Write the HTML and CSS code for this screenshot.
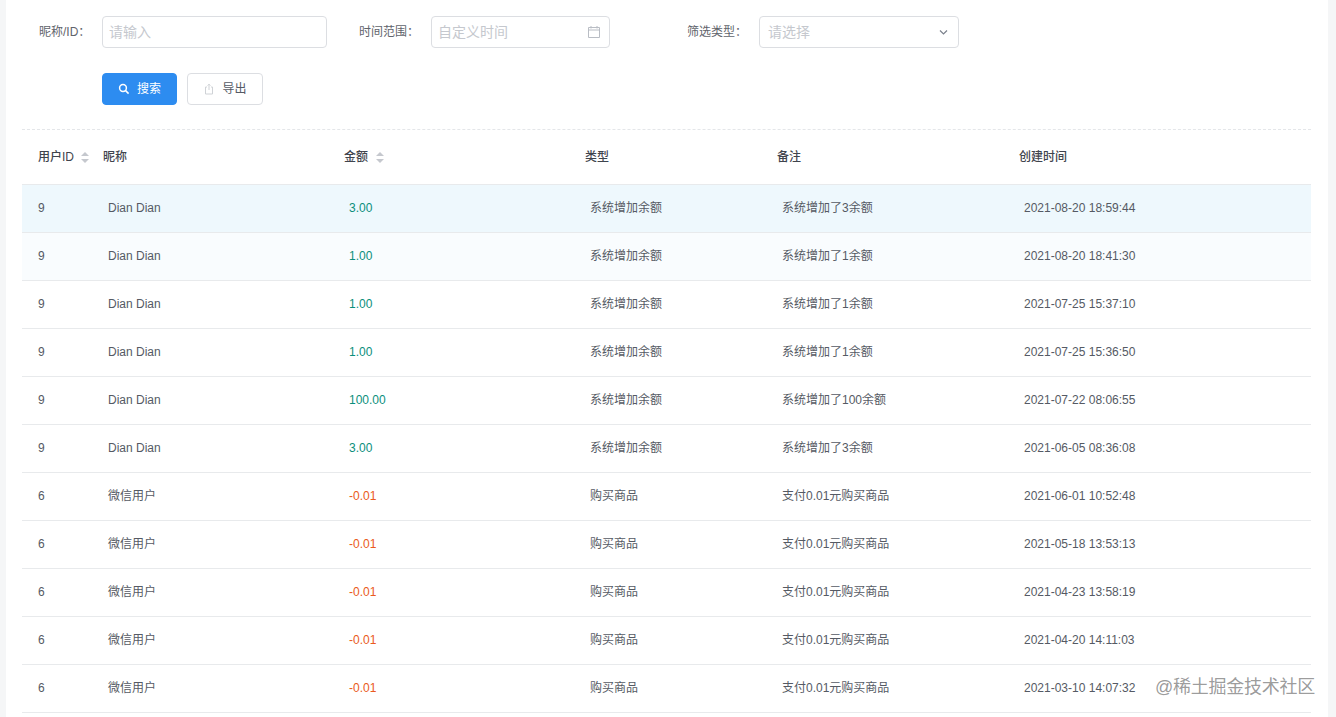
FILE: index.html
```html
<!DOCTYPE html>
<html lang="zh-CN">
<head>
<meta charset="utf-8">
<title>余额记录</title>
<link rel="stylesheet" href="styles.css">
</head>
<body>
<main class="panel">
  <form class="filters">
    <div class="filter-row">
      <label class="field field-name"><span class="field-label">昵称/ID：</span><span class="control control-name"><span class="placeholder">请输入</span></span></label>
      <label class="field field-time"><span class="field-label">时间范围：</span><span class="control control-time"><span class="placeholder">自定义时间</span>
        <svg class="ctl-icon" width="14" height="14" viewBox="0 0 14 14" fill="none" stroke="#b9bdc4" stroke-width="1"><path d="M1.5 2.5h11v10h-11zM1.5 5h11M4 1v2.5M10 1v2.5"/></svg></span></label>
      <label class="field field-type"><span class="field-label">筛选类型：</span><span class="control control-type"><span class="placeholder">请选择</span>
        <svg class="ctl-icon" width="12" height="12" viewBox="0 0 12 12" fill="none" stroke="#7b818c" stroke-width="1.2"><path d="M2 4.5l3.5 3.5L9 4.5"/></svg></span></label>
    </div>
    <div class="actions">
      <button type="button" class="btn btn-primary"><svg width="12" height="12" viewBox="0 0 12 12" fill="none" stroke="#fff" stroke-width="1.5"><circle cx="5" cy="5" r="3.4"/><path d="M7.6 7.6L10.6 10.6"/></svg>搜索</button>
      <button type="button" class="btn btn-default"><svg width="12" height="12" viewBox="0 0 12 12" fill="none" stroke="#cfd2d6" stroke-width="1"><path d="M4 4H2.5v7h7V4H8M6 7V1.2M4.6 2.6L6 1.2l1.4 1.4"/></svg>导出</button>
    </div>
  </form>

  <table class="data">
    <colgroup>
      <col class="c-id"><col class="c-name"><col class="c-amount"><col class="c-type"><col class="c-note"><col class="c-time">
    </colgroup>
    <thead>
      <tr>
        <th>用户ID<span class="sorter"></span></th>
        <th>昵称</th>
        <th>金额<span class="sorter sorter-far"></span></th>
        <th>类型</th>
        <th>备注</th>
        <th>创建时间</th>
      </tr>
    </thead>
    <tbody>
      <tr class="row-hover"><td>9</td><td>Dian Dian</td><td class="plus">3.00</td><td>系统增加余额</td><td>系统增加了3余额</td><td>2021-08-20 18:59:44</td></tr>
      <tr class="row-fade"><td>9</td><td>Dian Dian</td><td class="plus">1.00</td><td>系统增加余额</td><td>系统增加了1余额</td><td>2021-08-20 18:41:30</td></tr>
      <tr><td>9</td><td>Dian Dian</td><td class="plus">1.00</td><td>系统增加余额</td><td>系统增加了1余额</td><td>2021-07-25 15:37:10</td></tr>
      <tr><td>9</td><td>Dian Dian</td><td class="plus">1.00</td><td>系统增加余额</td><td>系统增加了1余额</td><td>2021-07-25 15:36:50</td></tr>
      <tr><td>9</td><td>Dian Dian</td><td class="plus">100.00</td><td>系统增加余额</td><td>系统增加了100余额</td><td>2021-07-22 08:06:55</td></tr>
      <tr><td>9</td><td>Dian Dian</td><td class="plus">3.00</td><td>系统增加余额</td><td>系统增加了3余额</td><td>2021-06-05 08:36:08</td></tr>
      <tr><td>6</td><td>微信用户</td><td class="minus">-0.01</td><td>购买商品</td><td>支付0.01元购买商品</td><td>2021-06-01 10:52:48</td></tr>
      <tr><td>6</td><td>微信用户</td><td class="minus">-0.01</td><td>购买商品</td><td>支付0.01元购买商品</td><td>2021-05-18 13:53:13</td></tr>
      <tr><td>6</td><td>微信用户</td><td class="minus">-0.01</td><td>购买商品</td><td>支付0.01元购买商品</td><td>2021-04-23 13:58:19</td></tr>
      <tr><td>6</td><td>微信用户</td><td class="minus">-0.01</td><td>购买商品</td><td>支付0.01元购买商品</td><td>2021-04-20 14:11:03</td></tr>
      <tr><td>6</td><td>微信用户</td><td class="minus">-0.01</td><td>购买商品</td><td>支付0.01元购买商品</td><td>2021-03-10 14:07:32</td></tr>
    </tbody>
  </table>
</main>
<div class="watermark">@稀土掘金技术社区</div>
</body>
</html>
```
FILE: styles.css
```css
* { box-sizing: border-box; }
html, body { margin: 0; height: 717px; overflow: hidden; }
body {
  background: #f5f6f7;
  font-family: "Liberation Sans", "Noto Sans CJK SC", sans-serif;
  font-size: 12px;
  color: #555a64;
}
.panel {
  margin: 0 8px 0 6px;
  height: 717px;
  padding: 16px 17px 0 16px;
  background: #fff;
}
.filters {
  height: 114px;
  border-bottom: 1px dashed #e4e6e9;
}
.filter-row { display: flex; height: 32px; }
.field { display: flex; align-items: center; }
.field-label { color: #5f646c; line-height: 32px; align-self: flex-start; }
.field-name { margin-left: 17px; width: 304px; }
.field-name .field-label { width: 63px; }
.field-time { margin-left: 16px; width: 251px; }
.field-time .field-label { width: 72px; }
.field-type { margin-left: 77px; }
.field-type .field-label { width: 72px; }
.control {
  display: flex;
  align-items: center;
  justify-content: space-between;
  height: 32px;
  padding: 0 9px 0 6px;
  background: #fff;
  border: 1px solid #dcdee2;
  border-radius: 4px;
  font-size: 14px;
}
.control-name { width: 225px; }
.control-time { width: 179px; }
.control-type { width: 200px; padding-left: 8px; }
.placeholder { color: #c5c8ce; line-height: 28px; height: 28px; overflow: hidden; }
.ctl-icon { flex: none; margin-right: -1px; }
.actions { display: flex; gap: 10px; margin: 25px 0 0 80px; }
.btn {
  display: flex;
  align-items: center;
  justify-content: center;
  gap: 7px;
  height: 32px;
  padding: 0 0 1px;
  border-radius: 4px;
  font: inherit;
  line-height: 16px;
}
.btn-primary { width: 75px; background: #2d8cf0; border: 1px solid #2d8cf0; color: #fff; }
.btn-default { width: 76px; background: #fff; border: 1px solid #dcdee2; color: #555a64; }

.data { width: 1289px; border-collapse: collapse; table-layout: fixed; }
.c-id { width: 65px; }
.c-name { width: 241px; }
.c-amount { width: 241px; }
.c-type { width: 192px; }
.c-note { width: 242px; }
.c-time { width: 308px; }
th {
  height: 54px;
  padding: 0 0 0 16px;
  text-align: left;
  font-weight: 500;
  line-height: 16px;
  color: #3f444d;
  border-bottom: 1px solid #e8eaec;
  white-space: nowrap;
}
td {
  height: 48px;
  padding: 0 0 0 21px;
  line-height: 16px;
  color: #555a64;
  border-bottom: 1px solid #e8eaec;
  white-space: nowrap;
}
td:first-child { padding-left: 16px; }
.row-hover td { background: #eef8fd; }
.row-fade td { background: #f9fcfe; }
td.plus { color: #0b8f7c; }
td.minus { color: #ea5a20; }
.sorter {
  display: inline-block;
  position: relative;
  width: 8px;
  height: 11px;
  margin-left: 7px;
  vertical-align: -2px;
}
.sorter-far { margin-left: 8px; }
.sorter::before, .sorter::after {
  content: "";
  position: absolute;
  left: 0;
  border-left: 4px solid transparent;
  border-right: 4px solid transparent;
}
.sorter::before { top: 0; border-bottom: 4px solid #c5c8ce; }
.sorter::after { bottom: 0; border-top: 4px solid #c5c8ce; }
.watermark {
  position: absolute;
  left: 1155px;
  top: 675px;
  font-size: 18px;
  line-height: 24px;
  letter-spacing: -0.25px;
  white-space: nowrap;
  color: rgba(90, 90, 90, 0.62);
}
```
